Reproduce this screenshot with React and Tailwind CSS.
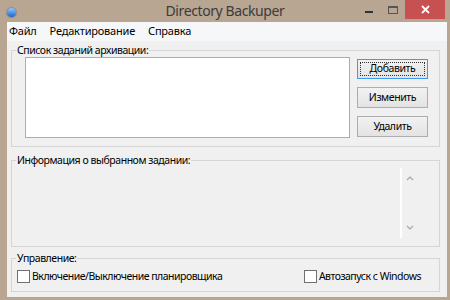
import React from "react";

const font = { fontFamily: '"Noto Sans", "Open Sans", sans-serif' };

const Button = ({ label, primary, className }) => (
  <div
    className={
      "w-[71px] flex items-center justify-center text-[10.5px] tracking-[-0.4px] text-black bg-gradient-to-b from-[#f2f2f2] to-[#e3e3e3] border " +
      (primary ? "border-[#3c9bf0] p-[2px] " : "border-[#adadad] ") +
      className
    }
  >
    {primary ? (
      <div className="w-full h-full flex items-center justify-center border border-dotted border-[#333]">
        {label}
      </div>
    ) : (
      label
    )}
  </div>
);

const CheckBox = ({ label }) => (
  <div className="flex items-center gap-[2px] text-[10.5px] tracking-[-0.5px] text-black">
    <div className="w-[13px] h-[13px] bg-white border border-[#707070]" />
    <span className="leading-[14px]">{label}</span>
  </div>
);

const Group = ({ title, className, children }) => (
  <fieldset className={"border border-[#d5d5d5] " + className}>
    <legend className="ml-[4px] px-[1px] text-[10.5px] tracking-[-0.45px] leading-[14px] text-black">
      {title}
    </legend>
    {children}
  </fieldset>
);

export default function App() {
  return (
    <div
      className="w-[450px] h-[300px] bg-[#b8a592] flex flex-col overflow-hidden"
      style={font}
    >
      {/* title bar */}
      <div className="h-[22px] grid grid-cols-[1fr_auto_1fr] items-start shrink-0">
        <div className="ml-[6px] mt-[7px] w-[11px] h-[11px] rounded-full bg-[#8d8d8d] p-[1px]">
          <div className="w-full h-full rounded-full bg-gradient-to-b from-[#8cc8ff] to-[#1e64c8]" />
        </div>
        <div className="text-[14px] tracking-[-0.4px] leading-[21px] text-[#3b3b3b]">
          Directory Backuper
        </div>
        <div className="flex items-start justify-end">
          <div className="w-[24px] h-[19px] flex items-center justify-center">
            <div className="w-[8px] h-[2px] bg-[#333] mt-[4px]" />
          </div>
          <div className="w-[24px] h-[19px] flex items-center justify-center">
            <div className="w-[10px] h-[8px] border border-[#555] border-t-2" />
          </div>
          <div className="w-[40px] h-[19px] bg-[#c75050] flex items-center justify-center mr-[5px]">
            <svg width="9" height="9" viewBox="0 0 9 9">
              <path d="M1 1L8 8M8 1L1 8" stroke="#fff" strokeWidth="1.8" />
            </svg>
          </div>
        </div>
      </div>

      {/* client area */}
      <div className="flex-1 ml-[7px] mr-[3px] mb-[3px] bg-[#f0f0f0] flex flex-col">
        <div className="h-[19px] bg-[#f6f7f8] flex items-center gap-[13px] pl-[2px] text-[11px] tracking-[-0.2px] text-black shrink-0">
          <span>Файл</span>
          <span>Редактирование</span>
          <span>Справка</span>
        </div>

        <div className="flex flex-col pl-[4px] pr-[7px] pt-[2px]">
          <Group title="Список заданий архивации:" className="pb-[8px]">
            <div className="flex pl-[13px]">
              <div className="w-[325px] h-[81px] bg-white border border-[#abadb3]" />
              <div className="flex flex-col ml-[7px]">
                <Button label="Добавить" primary className="mt-[2px] h-[20px]" />
                <Button label="Изменить" className="mt-[8px] h-[21px]" />
                <Button label="Удалить" className="mt-[8px] h-[21px]" />
              </div>
            </div>
          </Group>

          <Group title="Информация о выбранном задании:" className="mt-[6px]">
            <div className="h-[79px] flex justify-end pr-[25px] pt-[1px]">
              <div className="w-[2px] h-[70px] bg-white" />
              <div className="flex flex-col justify-between ml-[4px] py-[8px] h-[70px]">
                <svg width="8" height="5" viewBox="0 0 8 5">
                  <path d="M1 4L4 1L7 4" stroke="#a6a6a6" fill="none" strokeWidth="1.2" />
                </svg>
                <svg width="8" height="5" viewBox="0 0 8 5">
                  <path d="M1 1L4 4L7 1" stroke="#a6a6a6" fill="none" strokeWidth="1.2" />
                </svg>
              </div>
            </div>
          </Group>

          <Group title="Управление:" className="mt-[4px]">
            <div className="flex items-center justify-between pl-[5px] pr-[18px] pt-[4px] pb-[8px]">
              <CheckBox label="Включение/Выключение планировщика" />
              <CheckBox label="Автозапуск с Windows" />
            </div>
          </Group>
        </div>
      </div>
    </div>
  );
}
